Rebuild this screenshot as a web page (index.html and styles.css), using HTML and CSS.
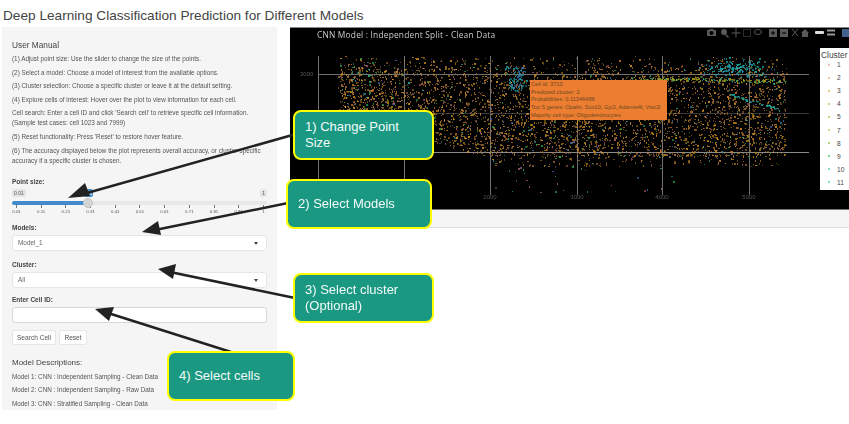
FILE: index.html
```html
<!DOCTYPE html>
<html lang="en">
<head>
    <meta charset="UTF-8">
    <title>Deep Learning Classification Prediction for Different Models</title>
    <link rel="stylesheet" href="styles.css">
</head>
<body>
    <h2 class="page-title">Deep Learning Classification Prediction for Different Models</h2>

    <div class="layout">
        <div class="well">
            <h4 class="manual-title">User Manual</h4>
            <p>(1) Adjust point size: Use the slider to change the size of the points.</p>
            <p>(2) Select a model: Choose a model of interest from the available options.</p>
            <p>(3) Cluster selection: Choose a specific cluster or leave it at the default setting.</p>
            <p>(4) Explore cells of interest: Hover over the plot to view information for each cell.</p>
            <p>Cell search: Enter a cell ID and click 'Search cell' to retrieve specific cell information.<br>(Sample test cases: cell 1023 and 7999)</p>
            <p>(5) Reset functionality: Press 'Reset' to restore hover feature.</p>
            <p>(6) The accuracy displayed below the plot represents overall accuracy, or cluster-specific accuracy if a specific cluster is chosen.</p>

            <label class="field-label slider-label">Point size:</label>
            <div class="slider">
                <div class="slider-ends"><span>0.01</span><span>1</span></div>
                <span class="slider-value">0.3</span>
                <div class="slider-track">
                    <div class="slider-fill"></div>
                    <div class="slider-handle"></div>
                </div>
                <div class="slider-ticks" id="ticks"></div>
            </div>

            <label class="field-label">Models:</label>
            <div class="select">Model_1</div>

            <label class="field-label">Cluster:</label>
            <div class="select">All</div>

            <label class="field-label field-label-tight">Enter Cell ID:</label>
            <div class="text-input"></div>

            <div class="buttons">
                <button class="btn btn-search">Search Cell</button>
                <button class="btn">Reset</button>
            </div>

            <h4 class="desc-title">Model Descriptions:</h4>
            <p class="desc">Model 1: CNN : Independent Sampling - Clean Data</p>
            <p class="desc">Model 2: CNN : Independent Sampling - Raw Data</p>
            <p class="desc">Model 3: CNN : Stratified Sampling - Clean Data</p>
        </div>

        <div class="plot-column">
            <div class="plot">
                <canvas id="scatter" width="559" height="181"></canvas>
                <div class="plot-title">CNN Model : Independent Split - Clean Data</div>

                <svg class="modebar" width="145" height="10" viewBox="0 0 145 10">
                    <g fill="#5a5a5a" stroke="none">
                        <path d="M3 2h2l1-1h3l1 1h2v6H3zM7.500 3a2 2 0 1 0 .01 0z" fill-rule="evenodd"/>
                        <circle cx="20" cy="4" r="3"/><path d="M22 6l3 3-1 1-3-3z"/>
                        <path d="M31.500 0h1v4.500h4v1h-4v4h-1v-4h-4v-1h4z"/>
                        <path d="M65 1h8v8h-8zM68.500 3v1.500H67v1h1.500V7h1V5.500H71v-1H69.500V3z" fill-rule="evenodd"/>
                        <path d="M76 1h8v8h-8zM78 4.500v1h4v-1z" fill-rule="evenodd"/>
                        <path d="M97 5l4-4 4 4h-1v4h-6V5z"/>
                        <rect x="111" y="3" width="9" height="3" rx="1" fill="#ddd"/>
                        <rect x="123" y="1.500" width="8" height="2" fill="#999"/>
                        <rect x="123" y="5.500" width="8" height="2" fill="#999"/>
                        <rect x="138" y="1" width="7" height="8" fill="#41618e"/>
                    </g>
                    <g fill="none" stroke="#5a5a5a">
                        <rect x="39.500" y="1.500" width="7" height="7" stroke-dasharray="1 1"/>
                        <ellipse cx="54" cy="4" rx="3.500" ry="2.500"/>
                        <path d="M88 1l6 7M94 1l-6 7"/>
                    </g>
                </svg>

                <span class="axis-y">3000</span>
                <span class="axis-x axis-1">2000</span>
                <span class="axis-x axis-2">3000</span>
                <span class="axis-x axis-3">4000</span>
                <span class="axis-x axis-4">5000</span>

                <div class="tooltip">
                    Cell id: 3710<br>
                    Predicted cluster: 2<br>
                    Probabilities: 0.11346488<br>
                    Top 5 genes: Opalin, Sox10, Gjc3, Adamts4l, Vwc2l<br>
                    Majority cell type: Oligodendrocytes
                </div>

                <div class="legend">
                    <div class="legend-title">Cluster</div>
                    <div class="legend-row"><i class="c1"></i>1</div>
                    <div class="legend-row"><i class="c2"></i>2</div>
                    <div class="legend-row"><i class="c3"></i>3</div>
                    <div class="legend-row"><i class="c4"></i>4</div>
                    <div class="legend-row"><i class="c5"></i>5</div>
                    <div class="legend-row"><i class="c7"></i>7</div>
                    <div class="legend-row"><i class="c8"></i>8</div>
                    <div class="legend-row"><i class="c9"></i>9</div>
                    <div class="legend-row"><i class="c10"></i>10</div>
                    <div class="legend-row"><i class="c11"></i>11</div>
                </div>
            </div>
            <div class="plot-strip"></div>
        </div>
    </div>

    <!-- annotation layer on top of the screenshot -->
    <svg class="arrows" width="849" height="424" viewBox="0 0 849 424">
        <g fill="#222" stroke="#222">
            <line x1="296" y1="134" x2="80" y2="195" stroke-width="2.500"/>
            <path d="M68 198L85 183L90 196Z" stroke="none"/>
            <line x1="288" y1="203" x2="155" y2="230" stroke-width="2.500"/>
            <path d="M142 232L158 221L161 235Z" stroke="none"/>
            <line x1="295" y1="298" x2="170" y2="272" stroke-width="2.500"/>
            <path d="M158 269L176 264L173 279Z" stroke="none"/>
            <line x1="231" y1="352" x2="108" y2="313" stroke-width="2.500"/>
            <path d="M95 309L114 307L109 321Z" stroke="none"/>
        </g>
    </svg>
    <div class="callout callout-1">1) Change Point Size</div>
    <div class="callout callout-2">2) Select Models</div>
    <div class="callout callout-3">3) Select cluster (Optional)</div>
    <div class="callout callout-4">4) Select cells</div>

    <script src="script.js"></script>
</body>
</html>
```
FILE: styles.css
```css
body {
    margin: 0;
    width: 849px;
    height: 424px;
    overflow: hidden;
    position: relative;
    background: white;
    font-family: "Liberation Sans", Arial, sans-serif;
    color: #555;
}

.page-title {
    margin: 0;
    padding: 7px 0 0 3px;
    height: 27px;
    box-sizing: border-box;
    font-size: 13.65px;
    line-height: 18px;
    font-weight: normal;
    color: #444;
}

.layout {
    display: flex;
    align-items: flex-start;
    padding-left: 2px;
}

/* sidebar */
.well {
    width: 275px;
    height: 383px;
    box-sizing: border-box;
    padding: 12px 10px 0 10px;
    background: #f5f5f5;
    overflow: hidden;
    filter: blur(0.3px);
}

.manual-title {
    margin: 0 0 3px;
    font-size: 8.3px;
    line-height: 12px;
    font-weight: normal;
    color: #444;
}

.well p {
    margin: 0 0 3.6px;
    font-size: 6.35px;
    line-height: 10px;
    color: #555;
}

.field-label {
    display: block;
    margin: 9px 0 2px;
    font-size: 6.5px;
    line-height: 10px;
    font-weight: bold;
    color: #444;
}

.slider-label {
    margin-top: 11px;
}

.field-label-tight {
    margin-top: 7px;
}

.slider {
    position: relative;
    width: 255px;
    height: 25px;
    margin-top: 2px;
}

.slider-ends {
    display: flex;
    justify-content: space-between;
    font-size: 5px;
    line-height: 8px;
    color: #555;
}

.slider-ends span {
    background: #e4e4e4;
    padding: 0 2px;
    border-radius: 2px;
}

.slider-value {
    position: absolute;
    left: 72px;
    top: 0;
    width: 9px;
    height: 8px;
    background: #428bca;
    color: white;
    font-size: 5px;
    line-height: 8px;
    text-align: center;
    border-radius: 2px;
}

.slider-track {
    position: relative;
    height: 4px;
    margin-top: 4px;
    background: #e8e8e8;
    border-radius: 2px;
}

.slider-fill {
    width: 76px;
    height: 4px;
    background: #428bca;
    border-radius: 2px 0 0 2px;
}

.slider-handle {
    position: absolute;
    left: 71px;
    top: -3px;
    width: 10px;
    height: 10px;
    box-sizing: border-box;
    border-radius: 50%;
    background: #d4d4d4;
    border: 1px solid #c4c4c4;
}

.slider-ticks {
    display: flex;
    justify-content: space-between;
    margin: 0 -1px 0 0;
}

.tick {
    width: 9px;
    font-size: 4.4px;
    line-height: 6px;
    text-align: center;
    color: #555;
}

.tick::before {
    content: '';
    display: block;
    width: 1px;
    height: 3px;
    margin: 0 auto 1px;
    background: #777;
}

.select, .text-input {
    width: 255px;
    height: 16px;
    box-sizing: border-box;
    background: white;
    border: 1px solid #e6e6e6;
    border-radius: 3px;
}

.select {
    position: relative;
    padding-left: 5px;
    font-size: 6.4px;
    line-height: 14px;
    color: #666;
}

.select::after {
    content: '';
    position: absolute;
    right: 8px;
    top: 6px;
    border: 2.5px solid transparent;
    border-top: 3px solid #444;
    border-bottom: none;
}

.text-input {
    border-color: #d8d8d8;
}

.buttons {
    display: flex;
    gap: 3px;
    margin-top: 7px;
}

.btn {
    width: 28px;
    height: 15px;
    padding: 0;
    background: white;
    border: 1px solid #e6e6e6;
    border-radius: 2px;
    font-family: inherit;
    font-size: 6.6px;
    color: #555;
}

.btn-search {
    width: 44px;
}

.desc-title {
    margin: 12px 0 3px;
    font-size: 8px;
    line-height: 12px;
    font-weight: normal;
    color: #444;
}

.well .desc {
    font-size: 6.35px;
}

/* plot */
.plot-column {
    margin-left: 13px;
    width: 559px;
    flex-shrink: 0;
}

.plot {
    position: relative;
    height: 181px;
    background: black;
    border-top: 1px solid #888;
}

#scatter {
    display: block;
}

.plot-strip {
    height: 17px;
    background: #f5f5f5;
    border-top: 1px solid #777;
    border-bottom: 1px solid #ddd;
}

.plot-title {
    position: absolute;
    left: 27px;
    top: 1px;
    font-family: "Open Sans", sans-serif;
    font-size: 8.4px;
    line-height: 12px;
    letter-spacing: 0.2px;
    color: #ccc;
    white-space: nowrap;
}

.modebar {
    position: absolute;
    left: 414px;
    top: 0;
}

.axis-y, .axis-x {
    position: absolute;
    font-size: 6px;
    line-height: 8px;
    color: #555;
}

.axis-y {
    left: 10px;
    top: 42px;
}

.axis-x {
    top: 165px;
    width: 20px;
    text-align: center;
}

.axis-1 { left: 190px; }
.axis-2 { left: 277px; }
.axis-3 { left: 362px; }
.axis-4 { left: 449px; }

.tooltip {
    position: absolute;
    left: 240px;
    top: 52px;
    width: 137px;
    height: 40px;
    box-sizing: border-box;
    padding: 1px 1px 0;
    background: #ed7d31;
    font-size: 5.7px;
    line-height: 7.67px;
    color: #6e4a22;
    white-space: nowrap;
    overflow: hidden;
}

.legend {
    position: absolute;
    left: 530px;
    top: 20px;
    width: 29px;
    height: 142px;
    background: white;
    color: #444;
    overflow: hidden;
}

.legend-title {
    height: 10px;
    padding-left: 1px;
    font-size: 8.4px;
    line-height: 14px;
}

.legend-row {
    display: flex;
    align-items: center;
    height: 13.1px;
    padding-left: 8px;
    font-size: 6.6px;
}

.legend-row i {
    width: 2px;
    height: 2px;
    margin-right: 7px;
    border-radius: 50%;
}

.c1 { background: #f4a8a0; }
.c2 { background: #eeb080; }
.c3 { background: #e4b860; }
.c4 { background: #d4bc60; }
.c5 { background: #c0c050; }
.c7 { background: #b8d060; }
.c8 { background: #98c860; }
.c9 { background: #50c060; }
.c10 { background: #60d0a0; }
.c11 { background: #60d0c0; }

/* annotations */
.arrows {
    position: absolute;
    left: 0;
    top: 0;
}

.callout {
    position: absolute;
    box-sizing: border-box;
    padding: 0 9px 0 10px;
    display: flex;
    align-items: center;
    background: #1a9882;
    border: 2.5px solid #ffff00;
    border-radius: 8px;
    color: #f4fbf9;
    font-size: 13px;
    line-height: 16px;
}

.callout-1 { left: 293px; top: 110px; width: 141px; height: 50px; }
.callout-2 { left: 286px; top: 179px; width: 146px; height: 50px; }
.callout-3 { left: 293px; top: 273px; width: 141px; height: 50px; }
.callout-4 { left: 167px; top: 351px; width: 128px; height: 50px; }
```
FILE: script.js
```js
// slider tick labels
let ticksEl=document.getElementById("ticks");
["0.01","0.11","0.21","0.31","0.41","0.51","0.61","0.71","0.81","0.91","1"].forEach(v=>{
    let t=document.createElement("span");
    t.className="tick";
    t.innerText=v;
    ticksEl.appendChild(t);
});

let ctx=document.getElementById("scatter").getContext("2d");

// fixed seed so the picture is always the same
let seed=12345;
function rnd(){
    seed=(seed*1664525+1013904223)%4294967296;
    return seed/4294967296;
}
function gauss(){
    return (rnd()+rnd()+rnd()-1.5)/1.5;
}

// gridlines, canvas coords = page coords minus (290,28)
ctx.lineWidth=1;
ctx.strokeStyle="#707070";
[28,114,200,287,372,459].forEach(x=>{
    ctx.beginPath(); ctx.moveTo(x+0.5,28); ctx.lineTo(x+0.5,167); ctx.stroke();
});
[[46,"#707070"],[85,"#3a3a3a"],[124,"#8a8a8a"]].forEach(g=>{
    ctx.strokeStyle=g[1];
    ctx.beginPath(); ctx.moveTo(28,g[0]+0.5); ctx.lineTo(519,g[0]+0.5); ctx.stroke();
});

function dot(x,y,c){
    ctx.fillStyle=c;
    ctx.globalAlpha=0.45+rnd()*0.4;
    ctx.fillRect(Math.round(x),Math.round(y),rnd()<0.35?2:1,rnd()<0.45?2:1);
    ctx.globalAlpha=1;
}

let warm=["#c98a1c","#d4911f","#b87a18","#dd9a2a","#c4803a","#a8861c","#c87830","#a06a50"];
let misc=["#2aa8a0","#2a9a50","#a05a80","#4a7ac0","#30b868","#c06070"];
function warmColor(){
    return rnd()<0.88?warm[Math.floor(rnd()*warm.length)]:misc[Math.floor(rnd()*misc.length)];
}

// main cloud, thin at the top and denser in the middle
for(let i=0;i<4400;i++){
    let x=48+rnd()*448;
    let bottom=x<200 ? 88+(x-48)*0.27 : 128;
    let y=28+Math.pow(rnd(),0.8)*(bottom-28);
    if(y<38 && rnd()<0.45) continue;
    dot(x,y,warmColor());
}
// lower edge of the cloud
for(let i=0;i<180;i++){
    dot(200+rnd()*296,124+rnd()*14,warmColor());
}
// sparse points under the cloud
for(let i=0;i<32;i++){
    dot(200+rnd()*190,136+rnd()*28,misc[Math.floor(rnd()*misc.length)]);
}
// teal patches
for(let i=0;i<110;i++){
    dot(226+gauss()*12,38+rnd()*24,rnd()<0.8?"#1fa0a8":"#4a7ac0");
}
for(let i=0;i<200;i++){
    dot(445+gauss()*45,40+gauss()*14,rnd()<0.85?"#1fb0b0":"#2a8ac0");
}
// left green bits
for(let i=0;i<30;i++){
    dot(55+rnd()*30,30+rnd()*36,rnd()<0.5?"#2aa050":"#2aa0a0");
}
// olive band across the right side
for(let i=0;i<200;i++){
    let x=340+rnd()*155;
    dot(x,50+(x-340)*0.02+gauss()*3,rnd()<0.7?"#a8a818":"#20a890");
}
// teal curve below it
for(let i=0;i<60;i++){
    let x=440+rnd()*50;
    dot(x,66+(x-440)*0.3+gauss()*2,"#20a8a0");
}
```
